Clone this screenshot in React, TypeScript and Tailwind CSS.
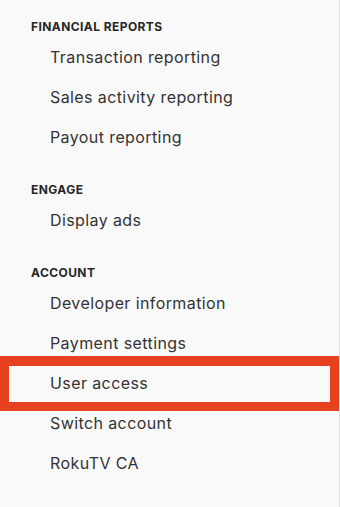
const sections = [
  {
    title: 'Financial reports',
    items: ['Transaction reporting', 'Sales activity reporting', 'Payout reporting'],
  },
  { title: 'Engage', items: ['Display ads'] },
  {
    title: 'Account',
    items: ['Developer information', 'Payment settings', 'User access', 'Switch account', 'RokuTV CA'],
  },
]

const highlighted = 'User access'

export default function App() {
  return (
    <div
      className="h-[507px] w-[340px] overflow-hidden border-r border-[#e2e2e2] bg-[#f9f9f9] pt-[19px]"
      style={{ fontFamily: 'Inter, "Noto Sans", sans-serif' }}
    >
      <nav className="flex flex-col gap-[25px]">
        {sections.map((section) => (
          <div key={section.title} className="flex flex-col">
            <div className="mb-0.5 flex h-4 items-center pl-[31px] text-[12px] font-bold uppercase tracking-[0.035em] text-[#262626]">
              {section.title}
            </div>
            {section.items.map((item) => (
              <div
                key={item}
                className="relative flex h-10 items-center pl-[50px] text-[16px] tracking-[0.025em] text-[#333333]"
              >
                {item}
                {item === highlighted ? (
                  <div className="pointer-events-none absolute inset-x-0 top-[-7px] bottom-[-8px] border-[9px] border-t-[10px] border-[#e8411f]" />
                ) : null}
              </div>
            ))}
          </div>
        ))}
      </nav>
    </div>
  )
}
